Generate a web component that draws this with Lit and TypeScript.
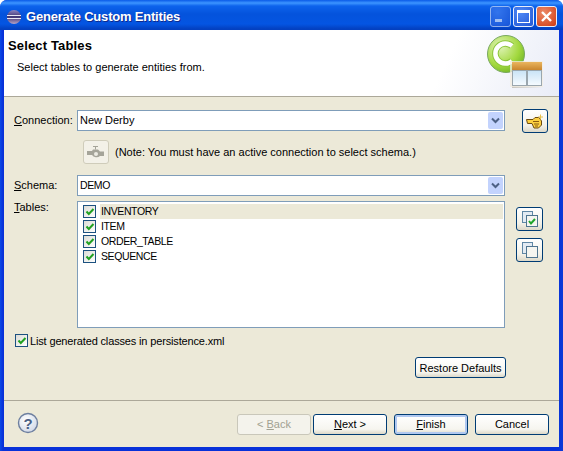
import { LitElement, css, html, svg } from 'lit';
import { customElement } from 'lit/decorators.js';

const tableNames = ['INVENTORY', 'ITEM', 'ORDER_TABLE', 'SEQUENCE'];

const comboArrow = html`
  <span class="arrow">
    <svg width="9" height="7" viewBox="0 0 9 7">
      <path d="M1 1.5 L4.5 5 L8 1.5" fill="none" stroke="#4d6185" stroke-width="2"></path>
    </svg>
  </span>
`;

const tick = svg`<path d="M2.5 5.5 L4.8 8 L9.5 3" fill="none" stroke="#21a121" stroke-width="2"></path>`;

const copyPages = (checked: boolean) => html`
  <svg width="16" height="16" viewBox="0 0 16 16">
    <rect x="0.5" y="0.5" width="10" height="11" fill="#e3ebf3" stroke="#5f87a5"></rect>
    <rect x="4.5" y="4.5" width="11" height="11" fill="#f5f5f0" stroke="#4f7590"></rect>
    ${checked
      ? svg`<path d="M7 10 L9 12.5 L13 8" fill="none" stroke="#1fa52c" stroke-width="2"></path>`
      : ''}
  </svg>
`;

@customElement('app-root')
export class AppRoot extends LitElement {
  render() {
    return html`
      <div class="window">
        <div class="titlebar">
          <svg class="app-icon" width="16" height="16" viewBox="0 0 16 16">
            <defs>
              <linearGradient id="eclipse" x1="0" y1="0" x2="0" y2="1">
                <stop offset="0" stop-color="#8d84c0"></stop>
                <stop offset="0.5" stop-color="#3c3273"></stop>
                <stop offset="1" stop-color="#b9a5c8"></stop>
              </linearGradient>
            </defs>
            <circle cx="8" cy="8" r="7" fill="url(#eclipse)"></circle>
            <rect x="1" y="6" width="14" height="1" fill="#e8e8f4"></rect>
            <rect x="1" y="9" width="14" height="1" fill="#e8e8f4"></rect>
          </svg>
          <span class="title">Generate Custom Entities</span>
          <div class="caption-buttons">
            <span class="cap min"><i></i></span>
            <span class="cap max"><i></i></span>
            <span class="cap close">
              <svg width="13" height="13" viewBox="0 0 13 13">
                <path d="M2 2 L11 11 M11 2 L2 11" stroke="#fff" stroke-width="2.4"></path>
              </svg>
            </span>
          </div>
        </div>

        <div class="client">
          <header class="banner">
            <div class="banner-text">
              <h1>Select Tables</h1>
              <p>Select tables to generate entities from.</p>
            </div>
            <svg class="logo" width="56" height="54" viewBox="0 0 56 54">
              <defs>
                <radialGradient id="ball" cx="0.35" cy="0.3" r="0.85">
                  <stop offset="0" stop-color="#e0f4b8"></stop>
                  <stop offset="0.6" stop-color="#a2d83e"></stop>
                  <stop offset="1" stop-color="#62ab22"></stop>
                </radialGradient>
                <linearGradient id="lid" x1="0" y1="0" x2="0" y2="1">
                  <stop offset="0" stop-color="#eab55e"></stop>
                  <stop offset="1" stop-color="#c9862e"></stop>
                </linearGradient>
                <linearGradient id="pane" x1="0" y1="0" x2="0" y2="1">
                  <stop offset="0" stop-color="#c9e3f6"></stop>
                  <stop offset="1" stop-color="#f6fbff"></stop>
                </linearGradient>
                <linearGradient id="shade" x1="0" y1="0" x2="1" y2="0">
                  <stop offset="0" stop-color="#b6b2a4" stop-opacity="0.7"></stop>
                  <stop offset="1" stop-color="#b6b2a4" stop-opacity="0"></stop>
                </linearGradient>
              </defs>
              <circle cx="19" cy="19" r="18.5" fill="url(#ball)" stroke="#79a860"></circle>
              <path d="M25 11 A10 10 0 1 0 25 26" fill="none" stroke="#8cc63a" stroke-width="6.5"></path>
              <path d="M25 11 A10 10 0 1 0 25 26" fill="none" stroke="#fff" stroke-width="4.5"></path>
              <rect x="25" y="50" width="31" height="3" fill="url(#shade)"></rect>
              <rect x="23" y="26" width="33" height="26" fill="#f1ece0" opacity="0.75"></rect>
              <rect x="25" y="27" width="30" height="8" fill="url(#lid)"></rect>
              <rect x="25.5" y="35.5" width="29" height="15" fill="url(#pane)" stroke="#9aa6ae"></rect>
              <rect x="39" y="35" width="2" height="16" fill="#9aa6ae"></rect>
            </svg>
          </header>

          <main class="form">
            <label class="field-label"><u>C</u>onnection:</label>
            <div class="combo">New Derby ${comboArrow}</div>
            <button class="tool hand">
              <svg width="18" height="15" viewBox="0 0 18 15">
                <path d="M0.5 5.5 H7 L9 3.5 H13 L15.5 7 V11 L12.5 14 H8 L6 9.5 H1.5 Z" fill="#fcd040" stroke="#6b4a10"></path>
                <path d="M7 7.5 H13 M8 10 H13 M9 12 H12" stroke="#8a5c10"></path>
                <path d="M14.5 0.5 V5.5 M12 3 H17" stroke="#e8c04c"></path>
              </svg>
            </button>

            <div class="note-row">
              <span class="schema-tool">
                <svg width="18" height="15" viewBox="0 0 18 15">
                  <path d="M0 6 H5 L6 4.5 H11 L13 6.5 H17 V11 H13 A5 4 0 0 1 5 10 H0 Z" fill="#a5a499"></path>
                  <circle cx="9" cy="9" r="2" fill="#ecebe3"></circle>
                  <path d="M6 1.5 H11 M8.5 1.5 V4.5" stroke="#a5a499"></path>
                </svg>
              </span>
              <span>(Note: You must have an active connection to select schema.)</span>
            </div>

            <label class="field-label"><u>S</u>chema:</label>
            <div class="combo"><span class="caps">DEMO</span> ${comboArrow}</div>
            <span></span>

            <label class="field-label tables-label"><u>T</u>ables:</label>
            <div class="list">
              ${tableNames.map(
                (name, i) => html`
                  <div class="list-row">
                    <span class="check">
                      <svg width="11" height="11" viewBox="0 0 11 11">${tick}</svg>
                    </span>
                    <span class="item caps ${i === 0 ? 'selected' : ''}">${name}</span>
                  </div>
                `,
              )}
            </div>
            <div class="side-tools">
              <button class="tool square">${copyPages(true)}</button>
              <button class="tool square">${copyPages(false)}</button>
            </div>

            <div class="persist">
              <span class="check">
                <svg width="11" height="11" viewBox="0 0 11 11">${tick}</svg>
              </span>
              <span class="persist-text">List generated classes in persistence.xml</span>
            </div>

            <div class="restore-row">
              <button class="btn restore">Restore Defaults</button>
            </div>
          </main>

          <footer class="footer">
            <svg class="help" width="22" height="22" viewBox="0 0 22 22">
              <defs>
                <radialGradient id="helpbg" cx="0.4" cy="0.35" r="0.8">
                  <stop offset="0" stop-color="#ffffff"></stop>
                  <stop offset="1" stop-color="#c9d2e4"></stop>
                </radialGradient>
              </defs>
              <circle cx="11" cy="11" r="9.5" fill="url(#helpbg)" stroke="#6d7f9f" stroke-width="1.4"></circle>
              <text x="11" y="16.5" text-anchor="middle" class="help-mark">?</text>
            </svg>
            <div class="wizard-buttons">
              <div class="nav-pair">
                <button class="btn disabled" disabled>&lt; <u>B</u>ack</button>
                <button class="btn"><u>N</u>ext &gt;</button>
              </div>
              <button class="btn default"><u>F</u>inish</button>
              <button class="btn">Cancel</button>
            </div>
          </footer>
        </div>
      </div>
    `;
  }

  static styles = css`
    :host {
      display: block;
      width: 563px;
      height: 451px;
      font-family: 'Liberation Sans', Arial, sans-serif;
      font-size: 11px;
      color: #000;
    }

    .window {
      display: flex;
      flex-direction: column;
      height: 451px;
      box-sizing: border-box;
      padding: 0 4px 4px;
      border-radius: 7px 7px 0 0;
      background: linear-gradient(90deg, #0a4ae6, #0831d9 3px, #0831d9 99%, #0a3bd6);
    }

    .titlebar {
      display: flex;
      align-items: center;
      height: 30px;
      flex: none;
      box-sizing: border-box;
      margin: 0 -4px;
      padding: 3px 6px 0 6px;
      border-radius: 7px 7px 0 0;
      background: linear-gradient(180deg, #0a5be8 0, #3d95ff 3px, #0d63ec 6px, #0453dc 14px, #0455e2 24px, #0340c0 29px);
    }

    .app-icon {
      margin-right: 4px;
    }

    .title {
      font: bold 13px 'Liberation Sans', sans-serif;
      letter-spacing: -0.2px;
      color: #fff;
      text-shadow: 1px 1px 0 #0f2a8c;
    }

    .caption-buttons {
      display: flex;
      gap: 2px;
      margin-left: auto;
    }

    .cap {
      display: flex;
      align-items: center;
      justify-content: center;
      box-sizing: border-box;
      width: 21px;
      height: 21px;
      border: 1px solid #e8eefb;
      border-radius: 3px;
      background: radial-gradient(circle at 35% 30%, #4f88f5, #2257d5);
    }

    .cap.min {
      opacity: 0.62;
      align-items: flex-end;
      justify-content: flex-start;
    }

    .cap.min i {
      width: 7px;
      height: 3px;
      margin: 0 0 4px 4px;
      background: #fff;
    }

    .cap.max i {
      box-sizing: border-box;
      width: 13px;
      height: 13px;
      border: 1px solid #fff;
      border-top-width: 3px;
    }

    .cap.close {
      background: radial-gradient(circle at 35% 30%, #ec8a68, #cf3a12);
    }

    .client {
      display: flex;
      flex-direction: column;
      flex: 1;
      min-height: 0;
      background: #ece9d8;
    }

    .banner {
      display: flex;
      justify-content: space-between;
      height: 67px;
      flex: none;
      box-sizing: border-box;
      padding: 5px 16px 0 4px;
      background: linear-gradient(115deg, #fff 78%, #e9ecf7 100%);
      border-bottom: 1px solid #aca899;
    }

    .banner h1 {
      margin: 3px 0 0;
      font: bold 13px 'Liberation Sans', sans-serif;
      letter-spacing: 0.15px;
    }

    .banner p {
      margin: 8px 0 0 9px;
    }

    .form {
      display: grid;
      grid-template-columns: 63px 428px 1fr;
      grid-template-rows: 21px 34px 21px 132px 23px auto;
      row-gap: 5px;
      flex: 1;
      padding: 13px 0 0 10px;
      align-items: start;
      min-height: 0;
    }

    .field-label {
      line-height: 21px;
    }

    .tables-label {
      line-height: 12px;
    }

    u {
      text-underline-offset: 1px;
    }

    .caps {
      font-size: 10.5px;
      letter-spacing: -0.4px;
    }

    .combo {
      position: relative;
      box-sizing: border-box;
      height: 21px;
      line-height: 19px;
      padding-left: 2px;
      background: #fff;
      border: 1px solid #7f9db9;
    }

    .arrow {
      position: absolute;
      top: 1px;
      right: 1px;
      display: flex;
      align-items: center;
      justify-content: center;
      width: 15px;
      height: 17px;
      border-radius: 2px;
      background: #c3d3fd;
    }

    .tool {
      display: flex;
      align-items: center;
      justify-content: center;
      box-sizing: border-box;
      padding: 0;
      background: linear-gradient(180deg, #fff, #f3f1e8 70%, #dcd8c8);
      border: 1px solid #003c74;
      border-radius: 3px;
    }

    .hand {
      width: 26px;
      height: 24px;
      margin: -1px 0 0 17px;
    }

    .note-row {
      grid-column: 2 / 4;
      display: flex;
      align-items: center;
      gap: 6px;
      padding: 4px 0 0 6px;
    }

    .schema-tool {
      display: flex;
      align-items: center;
      justify-content: center;
      box-sizing: border-box;
      width: 26px;
      height: 24px;
      background: #f3f1e8;
      border: 1px solid #cfccba;
      border-radius: 3px;
    }

    .list {
      box-sizing: border-box;
      height: 127px;
      padding: 2px 1px;
      background: #fff;
      border: 1px solid #7f9db9;
    }

    .list-row {
      display: flex;
      align-items: center;
      gap: 4px;
      height: 15px;
      padding-left: 4px;
    }

    .check {
      display: flex;
      flex: none;
      box-sizing: border-box;
      width: 13px;
      height: 13px;
      background: linear-gradient(135deg, #dcdcd6, #fff);
      border: 1px solid #1c5180;
    }

    .item {
      flex: 1;
      line-height: 15px;
      padding-left: 1px;
    }

    .item.selected {
      background: #ece9d8;
    }

    .side-tools {
      display: flex;
      flex-direction: column;
      gap: 7px;
      padding: 6px 0 0 11px;
    }

    .square {
      width: 27px;
      height: 24px;
    }

    .persist {
      grid-column: 1 / 4;
      display: flex;
      align-items: center;
      gap: 2px;
      padding-left: 1px;
      margin-top: -4px;
    }

    .persist-text {
      letter-spacing: -0.15px;
    }

    .restore-row {
      grid-column: 1 / 4;
      display: flex;
      justify-content: flex-end;
      padding-right: 53px;
      margin-top: -9px;
    }

    .btn {
      box-sizing: border-box;
      width: 74px;
      height: 21px;
      padding: 0;
      font: inherit;
      color: #000;
      background: linear-gradient(180deg, #fff, #f6f5ef 75%, #dcd8c8);
      border: 1px solid #003c74;
      border-radius: 3px;
    }

    .restore {
      width: 91px;
    }

    .btn.disabled {
      color: #a1a192;
      background: #f4f3ec;
      border-color: #c9c7ba;
    }

    .btn.default {
      box-shadow: inset 0 0 0 2px #b0c8f0;
    }

    .footer {
      display: flex;
      align-items: center;
      justify-content: space-between;
      flex: none;
      height: 47px;
      box-sizing: border-box;
      padding: 0 10px 0 13px;
      border-top: 1px solid #aca899;
    }

    .help {
      margin-bottom: 2px;
    }

    .help-mark {
      font: bold 15px 'Liberation Sans', sans-serif;
      fill: #4a5f86;
    }

    .wizard-buttons {
      display: flex;
      gap: 7px;
    }

    .nav-pair {
      display: flex;
      gap: 2px;
    }
  `;
}

declare global {
  interface HTMLElementTagNameMap {
    'app-root': AppRoot;
  }
}
